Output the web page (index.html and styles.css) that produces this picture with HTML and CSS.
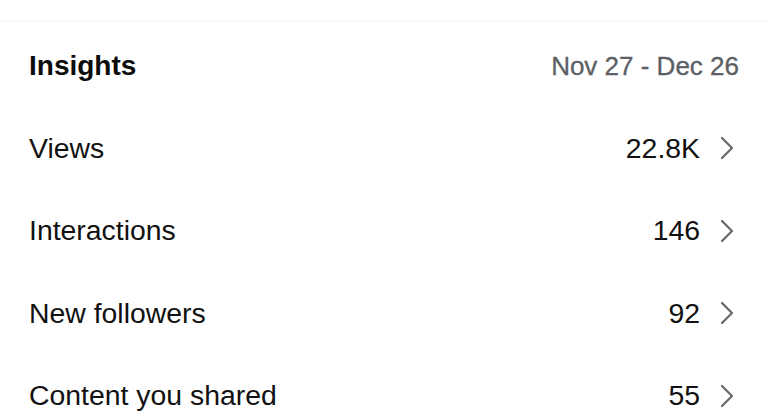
FILE: index.html
```html
<!DOCTYPE html>
<html>
<head>
<meta charset="utf-8">
<link rel="stylesheet" href="styles.css">
</head>
<body>
<div class="topbar"></div>
<section class="insights">
  <div class="header">
    <span class="title">Insights</span>
    <span class="range">Nov 27 - Dec 26</span>
  </div>
  <div class="row">
    <span class="label">Views</span>
    <span class="value">22.8K</span>
    <svg class="chev" viewBox="0 0 14 24" width="14" height="24"><path d="M2 2 L12 12 L2 22" fill="none" stroke="#676767" stroke-width="2.2" stroke-linecap="round" stroke-linejoin="round"/></svg>
  </div>
  <div class="row">
    <span class="label">Interactions</span>
    <span class="value">146</span>
    <svg class="chev" viewBox="0 0 14 24" width="14" height="24"><path d="M2 2 L12 12 L2 22" fill="none" stroke="#676767" stroke-width="2.2" stroke-linecap="round" stroke-linejoin="round"/></svg>
  </div>
  <div class="row">
    <span class="label">New followers</span>
    <span class="value">92</span>
    <svg class="chev" viewBox="0 0 14 24" width="14" height="24"><path d="M2 2 L12 12 L2 22" fill="none" stroke="#676767" stroke-width="2.2" stroke-linecap="round" stroke-linejoin="round"/></svg>
  </div>
  <div class="row">
    <span class="label">Content you shared</span>
    <span class="value">55</span>
    <svg class="chev" viewBox="0 0 14 24" width="14" height="24"><path d="M2 2 L12 12 L2 22" fill="none" stroke="#676767" stroke-width="2.2" stroke-linecap="round" stroke-linejoin="round"/></svg>
  </div>
</section>
</body>
</html>
```

FILE: styles.css
```css
html, body {
  margin: 0;
  padding: 0;
  background: #ffffff;
  overflow: hidden;
}
body {
  font-family: "Liberation Sans", Arial, sans-serif;
  color: #111111;
  width: 768px;
  height: 419px;
}
.topbar {
  height: 20px;
  border-bottom: 2px solid #f8f8f8;
}
.insights {
  padding: 0 34px 0 29px;
}
.header {
  height: 82px;
  padding-top: 3px;
  display: flex;
  align-items: center;
  justify-content: space-between;
}
.title {
  font-size: 28px;
  font-weight: 700;
  color: #0c0c0c;
}
.range {
  font-size: 26px;
  color: #5c6064;
  margin-right: -5px;
  -webkit-text-stroke: 0.3px #5c6064;
}
.row {
  height: 82.5px;
  display: flex;
  align-items: center;
}
.label {
  flex: 1;
  font-size: 28.4px;
  color: #111111;
}
.value {
  font-size: 28.4px;
  color: #111111;
  margin-right: 20px;
}
.chev {
  display: block;
  flex: none;
}
```
